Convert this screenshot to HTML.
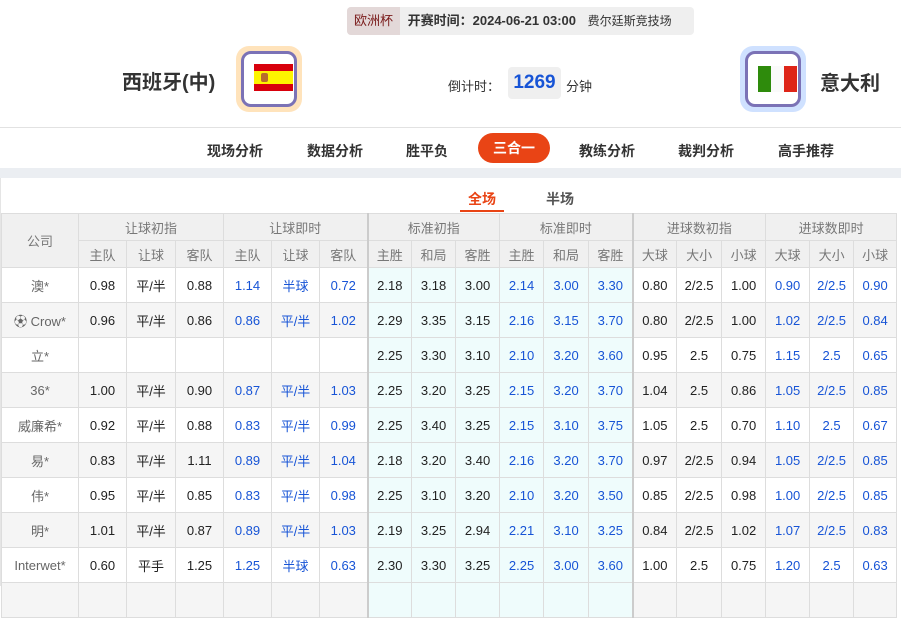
<!DOCTYPE html>
<html><head><meta charset="utf-8"><style>
*{margin:0;padding:0;box-sizing:border-box}
body{width:901px;height:586px;overflow:hidden;background:#fff;font-family:"Liberation Sans","Noto Sans CJK SC",sans-serif;color:#333;position:relative}
.abs{position:absolute}
.info{left:347px;top:7px;width:347px;height:28px;background:#efefef;border-radius:4px;font-size:13px;line-height:28px;white-space:nowrap}
.info .lg{display:inline-block;background:#e3d8d8;color:#7a1a1a;padding:0 7px;border-radius:4px 0 0 4px}
.flag{width:66px;height:66px;border-radius:13px;padding:5px}
.flag div{width:56px;height:56px;border:3px solid #7b72b6;border-radius:10px;background:#fff;position:relative}
.nav span{position:absolute;top:141px;font-size:14px;font-weight:bold;color:#333}
table{position:absolute;left:1px;top:213px;width:896px;border-collapse:collapse;table-layout:fixed;font-size:13px}
td,th{border:1px solid #ddd;text-align:center;height:35px;font-weight:normal;white-space:nowrap}
th{background:#f0f0f0;color:#777;height:27px;border-color:#ddd}
tr.h2 th{height:27px}
td{color:#222}
.b{color:#1754d6}
.c{background:#effcfc}
tr.g td{background:#f5f5f5}
tr.g td.c{background:#effcfc}
td.n{color:#666}
.vl{border-left:2px solid #ccc}
</style></head><body>
<div class="abs info"><span class="lg">欧洲杯</span> <b style="margin-left:4px">开赛时间：2024-06-21 03:00</b> <span style="margin-left:8px;font-size:12px">费尔廷斯竞技场</span></div>
<div class="abs" style="left:122px;top:66px;font-size:20px;font-weight:bold;color:#333">西班牙(中)</div>
<div class="abs flag" style="left:236px;top:46px;background:#ffe3bb"><div>
<span class="abs" style="left:10px;top:10px;width:39px;height:27px;background:#d8000c"></span>
<span class="abs" style="left:10px;top:17px;width:39px;height:13px;background:#fdf400"></span>
<span class="abs" style="left:17px;top:19px;width:7px;height:9px;background:#b86c2c;border-radius:2px"></span></div></div>
<div class="abs" style="left:448px;top:76px;font-size:13px">倒计时：</div>
<div class="abs" style="left:508px;top:67px;width:53px;height:32px;background:#efefef;border-radius:4px;color:#1754d6;font-size:19px;font-weight:bold;text-align:center;line-height:32px">1269</div>
<div class="abs" style="left:566px;top:76px;font-size:13px">分钟</div>
<div class="abs flag" style="left:740px;top:46px;background:#cfe1ff"><div>
<span class="abs" style="left:10px;top:12px;width:13px;height:26px;background:#2e8b0c"></span>
<span class="abs" style="left:23px;top:12px;width:13px;height:26px;background:#fafafa"></span>
<span class="abs" style="left:36px;top:12px;width:13px;height:26px;background:#de2518"></span></div></div>
<div class="abs" style="left:820px;top:67px;font-size:20px;font-weight:bold;color:#333">意大利</div>
<div class="abs" style="left:0;top:127px;width:901px;height:1px;background:#e2e2e2"></div>
<div class="nav">
<span style="left:207px">现场分析</span><span style="left:307px">数据分析</span><span style="left:406px">胜平负</span>
<span style="left:478px;top:133px;width:72px;height:30px;border-radius:15px;background:#e94415;color:#fff;text-align:center;line-height:30px">三合一</span>
<span style="left:579px">教练分析</span><span style="left:678px">裁判分析</span><span style="left:778px">高手推荐</span></div>
<div class="abs" style="left:0;top:168px;width:901px;height:10px;background:#ebeef2"></div>
<div class="abs" style="left:0;top:178px;width:1px;height:408px;background:#e5e5e5"></div>
<div class="abs" style="left:468px;top:189px;font-size:14px;font-weight:bold;color:#e94415">全场</div>
<div class="abs" style="left:460px;top:210px;width:44px;height:2px;background:#e94415"></div>
<div class="abs" style="left:546px;top:189px;font-size:14px;font-weight:bold;color:#555">半场</div>
<table>
<colgroup><col style="width:77px"><col style="width:48px"><col style="width:49px"><col style="width:48px"><col style="width:48px"><col style="width:48px"><col style="width:48px"><col style="width:44px"><col style="width:44px"><col style="width:44px"><col style="width:44px"><col style="width:45px"><col style="width:44px"><col style="width:44px"><col style="width:45px"><col style="width:44px"><col style="width:44px"><col style="width:44px"><col style="width:43px"></colgroup>
<tr><th rowspan="2" style="height:54px">公司</th><th colspan="3">让球初指</th><th colspan="3">让球即时</th><th colspan="3" class="vl">标准初指</th><th colspan="3">标准即时</th><th colspan="3" class="vl">进球数初指</th><th colspan="3">进球数即时</th></tr>
<tr class="h2"><th>主队</th><th>让球</th><th>客队</th><th>主队</th><th>让球</th><th>客队</th><th class="vl">主胜</th><th>和局</th><th>客胜</th><th>主胜</th><th>和局</th><th>客胜</th><th class="vl">大球</th><th>大小</th><th>小球</th><th>大球</th><th>大小</th><th>小球</th></tr>
<tr><td class="n">澳*</td><td>0.98</td><td>平/半</td><td>0.88</td><td class="b">1.14</td><td class="b">半球</td><td class="b">0.72</td><td class="c vl">2.18</td><td class="c">3.18</td><td class="c">3.00</td><td class="c b">2.14</td><td class="c b">3.00</td><td class="c b">3.30</td><td class="vl">0.80</td><td>2/2.5</td><td>1.00</td><td class="b">0.90</td><td class="b">2/2.5</td><td class="b">0.90</td></tr>
<tr class="g"><td class="n">⚽ Crow*</td><td>0.96</td><td>平/半</td><td>0.86</td><td class="b">0.86</td><td class="b">平/半</td><td class="b">1.02</td><td class="c vl">2.29</td><td class="c">3.35</td><td class="c">3.15</td><td class="c b">2.16</td><td class="c b">3.15</td><td class="c b">3.70</td><td class="vl">0.80</td><td>2/2.5</td><td>1.00</td><td class="b">1.02</td><td class="b">2/2.5</td><td class="b">0.84</td></tr>
<tr><td class="n">立*</td><td></td><td></td><td></td><td></td><td></td><td></td><td class="c vl">2.25</td><td class="c">3.30</td><td class="c">3.10</td><td class="c b">2.10</td><td class="c b">3.20</td><td class="c b">3.60</td><td class="vl">0.95</td><td>2.5</td><td>0.75</td><td class="b">1.15</td><td class="b">2.5</td><td class="b">0.65</td></tr>
<tr class="g"><td class="n">36*</td><td>1.00</td><td>平/半</td><td>0.90</td><td class="b">0.87</td><td class="b">平/半</td><td class="b">1.03</td><td class="c vl">2.25</td><td class="c">3.20</td><td class="c">3.25</td><td class="c b">2.15</td><td class="c b">3.20</td><td class="c b">3.70</td><td class="vl">1.04</td><td>2.5</td><td>0.86</td><td class="b">1.05</td><td class="b">2/2.5</td><td class="b">0.85</td></tr>
<tr><td class="n">威廉希*</td><td>0.92</td><td>平/半</td><td>0.88</td><td class="b">0.83</td><td class="b">平/半</td><td class="b">0.99</td><td class="c vl">2.25</td><td class="c">3.40</td><td class="c">3.25</td><td class="c b">2.15</td><td class="c b">3.10</td><td class="c b">3.75</td><td class="vl">1.05</td><td>2.5</td><td>0.70</td><td class="b">1.10</td><td class="b">2.5</td><td class="b">0.67</td></tr>
<tr class="g"><td class="n">易*</td><td>0.83</td><td>平/半</td><td>1.11</td><td class="b">0.89</td><td class="b">平/半</td><td class="b">1.04</td><td class="c vl">2.18</td><td class="c">3.20</td><td class="c">3.40</td><td class="c b">2.16</td><td class="c b">3.20</td><td class="c b">3.70</td><td class="vl">0.97</td><td>2/2.5</td><td>0.94</td><td class="b">1.05</td><td class="b">2/2.5</td><td class="b">0.85</td></tr>
<tr><td class="n">伟*</td><td>0.95</td><td>平/半</td><td>0.85</td><td class="b">0.83</td><td class="b">平/半</td><td class="b">0.98</td><td class="c vl">2.25</td><td class="c">3.10</td><td class="c">3.20</td><td class="c b">2.10</td><td class="c b">3.20</td><td class="c b">3.50</td><td class="vl">0.85</td><td>2/2.5</td><td>0.98</td><td class="b">1.00</td><td class="b">2/2.5</td><td class="b">0.85</td></tr>
<tr class="g"><td class="n">明*</td><td>1.01</td><td>平/半</td><td>0.87</td><td class="b">0.89</td><td class="b">平/半</td><td class="b">1.03</td><td class="c vl">2.19</td><td class="c">3.25</td><td class="c">2.94</td><td class="c b">2.21</td><td class="c b">3.10</td><td class="c b">3.25</td><td class="vl">0.84</td><td>2/2.5</td><td>1.02</td><td class="b">1.07</td><td class="b">2/2.5</td><td class="b">0.83</td></tr>
<tr><td class="n">Interwet*</td><td>0.60</td><td>平手</td><td>1.25</td><td class="b">1.25</td><td class="b">半球</td><td class="b">0.63</td><td class="c vl">2.30</td><td class="c">3.30</td><td class="c">3.25</td><td class="c b">2.25</td><td class="c b">3.00</td><td class="c b">3.60</td><td class="vl">1.00</td><td>2.5</td><td>0.75</td><td class="b">1.20</td><td class="b">2.5</td><td class="b">0.63</td></tr>
<tr class="g"><td></td><td></td><td></td><td></td><td></td><td></td><td></td><td class="c vl"></td><td class="c"></td><td class="c"></td><td class="c"></td><td class="c"></td><td class="c"></td><td class="vl"></td><td></td><td></td><td></td><td></td><td></td></tr>
</table>
</body></html>
